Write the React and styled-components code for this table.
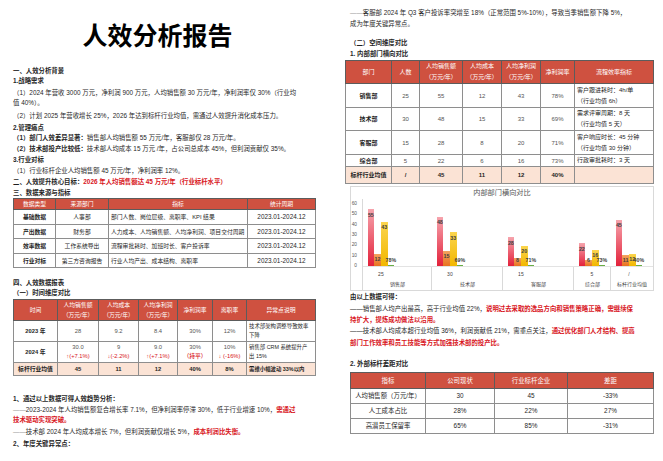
import React from "react";
import styled, { createGlobalStyle } from "styled-components";

const GlobalStyle = createGlobalStyle`
  html, body {
    margin: 0;
    padding: 0;
    background: #fff;
  }
  body {
    font-family: "Liberation Sans", "Noto Sans CJK SC", sans-serif;
    color: #1f1f1f;
  }
`;

// Chinese punctuation: turn , ( ) : into their full-width forms
const zh = (s) =>
  s
    .replace(/,/g, "\uFF0C")
    .replace(/\(/g, "\uFF08")
    .replace(/\)/g, "\uFF09")
    .replace(/:/g, "\uFF1A");

const Spread = styled.div`
  display: flex;
  gap: 34px;
  padding-left: 13px;
  width: 663px;
  height: 461px;
  box-sizing: border-box;
  overflow: hidden;
`;

const Page = styled.div`
  flex: 0 0 303px;
  padding-top: ${({ $top }) => $top || 0}px;
`;

const Title = styled.h1`
  margin: 20px 14px 0 0;
  font-family: "Noto Sans CJK SC", sans-serif;
  font-size: 25px;
  line-height: 28px;
  font-weight: 700;
  text-align: center;
  color: #000;
`;

const Line = styled.div`
  margin-top: ${({ $mt }) => $mt || 0}px;
  font-size: 6.4px;
  line-height: 10.5px;
  font-weight: ${({ $bold }) => ($bold ? 700 : 400)};
  white-space: nowrap;
`;

const B = styled.b`
  font-weight: 700;
`;

const Red = styled.span`
  color: #d8141c;
  font-weight: 700;
`;

const Dash = styled.span`
  color: ${({ $dark }) => ($dark ? "#222" : "#9a9a9a")};
`;

// tables
const Table = styled.table`
  border-collapse: collapse;
  table-layout: fixed;
  width: ${({ $w }) => $w}px;
  margin-left: ${({ $shift }) => $shift || 0}px;
  margin-top: ${({ $mt }) => $mt || 0}px;
  font-family: "Liberation Sans", "Noto Sans CJK SC", sans-serif;
  font-size: ${({ $fs }) => $fs || 5.8}px;
  color: #1f1f1f;
`;

const Col = styled.col`
  width: ${({ $w }) => $w}px;
`;

const Tr = styled.tr`
  height: ${({ $h }) => $h}px;
  background: ${({ $bench }) => ($bench ? "#fbe3d5" : "#fff")};
`;

const Th = styled.th`
  background: #cf5140;
  color: #fff;
  font-weight: 400;
  line-height: ${({ $lh }) => $lh || 10}px;
  padding: 0;
  border: 1px solid #5c5c5c;
  text-align: center;
  white-space: nowrap;
`;

const Td = styled.td`
  border: 1px solid #8e8e8e;
  padding: 0 ${({ $left }) => ($left ? 2 : 0)}px;
  text-align: ${({ $left }) => ($left ? "left" : "center")};
  font-weight: ${({ $bold }) => ($bold ? 700 : 400)};
  font-size: ${({ $fs }) => ($fs ? `${$fs}px` : "inherit")};
  color: ${({ $muted }) => ($muted ? "#555" : "#1f1f1f")};
  line-height: ${({ $lh }) => $lh || 10}px;
  white-space: nowrap;
  overflow: hidden;
`;

const Change = styled.span`
  color: #d8141c;
  font-weight: 500;
`;

// chart
const ChartBox = styled.div`
  width: 304px;
  height: 105px;
  margin-top: 2px;
  box-sizing: border-box;
  border: 1px solid #d9d9d9;
  display: flex;
  flex-direction: column;
`;

const ChartTitle = styled.div`
  text-align: center;
  font-size: 7.2px;
  line-height: 11px;
  color: #595959;
`;

const PlotRow = styled.div`
  display: flex;
  margin-top: 1px;
  flex: 1;
`;

const YAxis = styled.div`
  width: 11px;
  display: flex;
  flex-direction: column;
`;

const Tick = styled.div`
  height: 10.33px;
  line-height: 10.33px;
  font-size: 4.8px;
  color: #595959;
  text-align: right;
  padding-right: 5px;
`;

const Group = styled.div`
  width: ${({ $w }) => $w}px;
  box-sizing: border-box;
  padding-top: 5.17px;
  display: flex;
  flex-direction: column;
  border-left: ${({ $axis }) => ($axis ? "1px solid #d9d9d9" : "none")};
`;

const BarsArea = styled.div`
  height: 62px;
  flex-shrink: 0;
  display: flex;
  align-items: flex-end;
  padding-left: 4.5px;
  border-bottom: 1px solid #e3e3e3;
`;

const barFill = [
  "linear-gradient(180deg, #f6a4ad 0%, #e3213a 100%)",
  "linear-gradient(180deg, #f3a360 0%, #e8721f 100%)",
  "linear-gradient(180deg, #fbd54e 0%, #f2b700 100%)",
  "#68ae45",
];

const Bar = styled.div`
  position: relative;
  width: 6.7px;
  flex-shrink: 0;
  min-height: 1px;
  background: ${({ $i }) => barFill[$i]};
`;

const BarLabel = styled.span`
  position: absolute;
  left: 50%;
  transform: translateX(-50%);
  font-size: 5.3px;
  line-height: 9px;
  font-weight: 700;
  color: #404040;
  white-space: nowrap;
`;

const CatArea = styled.div`
  flex: 1;
  border-left: ${({ $sep }) => ($sep ? "1px solid #d9d9d9" : "none")};
  margin-left: ${({ $sep }) => ($sep ? -1 : 0)}px;
`;

const CatTop = styled.div`
  width: 26.8px;
  margin: 2.5px 0 0 4.5px;
  text-align: center;
  font-size: 5px;
  line-height: 9px;
  color: #404040;
`;

const CatBottom = styled.div`
  margin-top: 1px;
  text-align: center;
  font-size: 5px;
  line-height: 9px;
  color: #404040;
  white-space: nowrap;
`;

const depts = [
  { name: "销售部", count: "25", w: 70, vals: [55, 12, 43, 0.78], tags: ["55", "12", "43", "78%"] },
  { name: "技术部", count: "30", w: 71, vals: [48, 15, 33, 0.69], tags: ["48", "15", "33", "69%"] },
  { name: "客服部", count: "15", w: 71, vals: [28, 8, 20, 0.71], tags: ["28", "8", "20", "71%"] },
  { name: "综合部", count: "5", w: 37, vals: [22, 6, 16, 0.73], tags: ["22", "6", "16", "73%"] },
  { name: "标杆行业均值", count: "/", w: 42, vals: [45, 11, 12, 0.4], tags: ["45", "11", "12", "40%"] },
];

const SCALE = 62 / 60;

const DeptChart = () => (
  <ChartBox>
    <ChartTitle>内部部门横向对比</ChartTitle>
    <PlotRow>
      <YAxis>
        {["60", "50", "40", "30", "20", "10", "0"].map((t) => (
          <Tick key={t}>{t}</Tick>
        ))}
      </YAxis>
      {depts.map((d, gi) => (
        <Group key={d.name} $w={d.w} $axis={gi === 0}>
          <BarsArea>
            {d.vals.map((v, i) => {
              const h = v * SCALE;
              return (
                <Bar key={i} $i={i} style={{ height: h }}>
                  <BarLabel style={{ bottom: Math.max(h - 10.5, 1.5) }}>{d.tags[i]}</BarLabel>
                </Bar>
              );
            })}
          </BarsArea>
          <CatArea $sep={gi > 0}>
            <CatTop>{d.count}</CatTop>
            <CatBottom>{d.name}</CatBottom>
          </CatArea>
        </Group>
      ))}
    </PlotRow>
  </ChartBox>
);

const Cols = ({ widths }) => (
  <colgroup>
    {widths.map((w, i) => (
      <Col key={i} $w={w} />
    ))}
  </colgroup>
);

const UNIT = zh("(万元/年)");

const sourceRows = [
  ["基础数据", "人事部", "部门人数、岗位层级、离职率、KPI 结果"],
  ["产出数据", "财务部", "人力成本、人均销售额、人均净利润、项目交付周期"],
  ["效率数据", "工作系统导出", "流程审批耗时、加班时长、客户投诉率"],
  ["行业对标", "第三方咨询报告", "行业人均产出、成本结构、离职率"],
];

const SourceTable = () => (
  <Table $w={302}>
    <Cols widths={[42, 53, 139, 68]} />
    <tbody>
      <Tr $h={11}>
        <Th>数据类型</Th>
        <Th>来源部门</Th>
        <Th>指标</Th>
        <Th>统计周期</Th>
      </Tr>
      {sourceRows.map((r) => (
        <Tr key={r[0]} $h={14.5}>
          <Td $bold>{r[0]}</Td>
          <Td>{r[1]}</Td>
          <Td $left>{r[2]}</Td>
          <Td $fs={6.4}>2023.01-2024.12</Td>
        </Tr>
      ))}
    </tbody>
  </Table>
);

const TimeTable = () => (
  <Table $w={302}>
    <Cols widths={[44, 41, 40, 39, 35, 34, 69]} />
    <tbody>
      <Tr $h={21}>
        <Th>时间</Th>
        <Th>人均销售额<br />{UNIT}</Th>
        <Th>人均成本<br />{UNIT}</Th>
        <Th>人均净利润<br />{UNIT}</Th>
        <Th>净利润率</Th>
        <Th>离职率</Th>
        <Th>异常点说明</Th>
      </Tr>
      <Tr $h={21}>
        <Td $bold>2023 年</Td>
        <Td $muted>28</Td>
        <Td $muted>9.2</Td>
        <Td $muted>8.4</Td>
        <Td $muted>30%</Td>
        <Td $muted>12%</Td>
        <Td $left $fs={5.4} $lh={9}>技术部架构调整导致效率<br />下降</Td>
      </Tr>
      <Tr $h={21}>
        <Td $bold>2024 年</Td>
        <Td $muted $lh={9}>30.0<br /><Change>↑(+7.1%)</Change></Td>
        <Td $muted $lh={9}>9<br /><Change>↓(-2.2%)</Change></Td>
        <Td $muted $lh={9}>9.0<br /><Change>↑(+7.1%)</Change></Td>
        <Td $muted $lh={9}>30%<br /><Change>{zh("(持平)")}</Change></Td>
        <Td $muted $lh={9}>10%<br /><Change>↓ (-16%)</Change></Td>
        <Td $left $fs={5.4} $lh={9}>销售部 CRM 系统提升产<br />出 15%</Td>
      </Tr>
      <Tr $h={13} $bench>
        <Td $bold>标杆行业均值</Td>
        <Td $bold>45</Td>
        <Td $bold>11</Td>
        <Td $bold>12</Td>
        <Td $bold>40%</Td>
        <Td $bold>8%</Td>
        <Td $bold $left $fs={5.4}>需维小幅波动 33%以内</Td>
      </Tr>
    </tbody>
  </Table>
);

const deptRows = [
  { h: 24, name: "销售部", v: ["25", "55", "12", "43", "78%"], note: ["客户跟进耗时:4h/单", "(行业均值 6h)"] },
  { h: 22, name: "技术部", v: ["30", "48", "15", "33", "69%"], note: ["需求评审周期:8 天", "(行业均值 5 天)"] },
  { h: 24, name: "客服部", v: ["15", "28", "8", "20", "71%"], note: ["客户响应时长:45 分钟", "(行业均值 30 分钟)"] },
  { h: 12, name: "综合部", v: ["5", "22", "6", "16", "73%"], note: ["行政审批耗时:3 天"] },
];

const DeptTable = () => (
  <Table $w={308} $shift={-5} $mt={0.75} $fs={6}>
    <Cols widths={[46, 28, 43, 39, 39, 34, 79]} />
    <tbody>
      <Tr $h={22}>
        <Th $lh={11}>部门</Th>
        <Th $lh={11}>人数</Th>
        <Th $lh={11}>人均销售额<br />{UNIT}</Th>
        <Th $lh={11}>人均成本<br />{UNIT}</Th>
        <Th $lh={11}>人均净利润<br />{UNIT}</Th>
        <Th $lh={11}>净利润率</Th>
        <Th $lh={11}>流程效率指标</Th>
      </Tr>
      {deptRows.map((r) => (
        <Tr key={r.name} $h={r.h}>
          <Td $bold>{r.name}</Td>
          {r.v.map((x, i) => (
            <Td key={i} $muted>{x}</Td>
          ))}
          <Td $left $lh={11}>
            {zh(r.note[0])}
            {r.note[1] && <br />}
            {r.note[1] && zh(r.note[1])}
          </Td>
        </Tr>
      ))}
      <Tr $h={17} $bench>
        <Td $bold>标杆行业均值</Td>
        <Td $bold>/</Td>
        <Td $bold>45</Td>
        <Td $bold>11</Td>
        <Td $bold>12</Td>
        <Td $bold>40%</Td>
        <Td />
      </Tr>
    </tbody>
  </Table>
);

const gapRows = [
  [zh("人均销售额(万元/年)"), "30", "45", "-33%"],
  ["人工成本占比", "28%", "22%", "27%"],
  ["高潜员工保留率", "65%", "85%", "-31%"],
];

const GapTable = () => (
  <Table $w={303} $mt={2.75} $fs={6.4}>
    <Cols widths={[75, 69, 73, 86]} />
    <tbody>
      <Tr $h={16}>
        <Th>指标</Th>
        <Th>公司现状</Th>
        <Th>行业标杆企业</Th>
        <Th>差距</Th>
      </Tr>
      {gapRows.map((r) => (
        <Tr key={r[0]} $h={15}>
          {r.map((x, i) => (
            <Td key={i}>{x}</Td>
          ))}
        </Tr>
      ))}
    </tbody>
  </Table>
);

const App = () => (
  <>
    <GlobalStyle />
    <Spread>
      <Page>
        <Title>人效分析报告</Title>
        <Line $mt={17.75} $bold>一、人效分析背景</Line>
        <Line $bold>1.战略需求</Line>
        <Line $mt={1}>{zh("(1)2024 年营收 3000 万元,净利润 900 万元,人均销售额 30 万元/年,净利润率仅 30%(行业均")}</Line>
        <Line>{zh("值 40%)。")}</Line>
        <Line $mt={2}>{zh("(2)计划 2025 年营收增长 25%,2026 年达到标杆行业均值,需通过人效提升消化成本压力。")}</Line>
        <Line $mt={1.5} $bold>2.管理痛点</Line>
        <Line>
          <B>{zh("(1)部门人效差异显著:")}</B>
          {zh("销售部人均销售额 55 万元/年,客服部仅 28 万元/年。")}
        </Line>
        <Line>
          <B>{zh("(2)技术部投产比较低:")}</B>
          {zh("技术部人均成本 15 万元 /年,占公司总成本 45%,但利润贡献仅 35%。")}
        </Line>
        <Line $mt={1} $bold>3.行业对标</Line>
        <Line>{zh("(1)行业标杆企业人均销售额 45 万元/年,净利润率 12%。")}</Line>
        <Line $mt={1}>
          <B>{zh("二、人效提升核心目标:")}</B>
          <Red>{zh("2026 年人均销售额达 45 万元/年(行业标杆水平)")}</Red>
        </Line>
        <Line $bold>三、数据来源与指标</Line>
        <SourceTable />
        <Line $mt={9.5} $bold>四、人效数据报表</Line>
        <Line $bold>{zh("(一)时间维度对比")}</Line>
        <TimeTable />
        <Line $mt={18} $bold>{zh("1、通过以上数据可得人效趋势分析:")}</Line>
        <Line $mt={0.5}>
          <Dash>——</Dash>
          {zh("2023-2024 年人均销售额复合增长率 7.1%,但净利润率停滞 30%,低于行业增速 10%,")}
          <Red>需通过</Red>
        </Line>
        <Line><Red>技术驱动实现突破。</Red></Line>
        <Line $mt={1}>
          <Dash>——</Dash>
          {zh("技术部 2024 年人均成本增长 7%,但利润贡献仅增长 5%,")}
          <Red>成本利润比失衡。</Red>
        </Line>
        <Line $mt={1.5} $bold>{zh("2、年度关键异常点:")}</Line>
      </Page>
      <Page $top={7.75}>
        <Line>
          <Dash>——</Dash>
          {zh("客服部 2024 年 Q3 客户投诉率突增至 18%(正常范围 5%-10%),导致当季销售额下降 5%,")}
        </Line>
        <Line $mt={0.5}>成为年度关键异常点。</Line>
        <Line $mt={8.5} $bold>{zh("(二)空间维度对比")}</Line>
        <Line $mt={0.5} $bold>1. 内部部门横向对比</Line>
        <DeptTable />
        <DeptChart />
        <Line $mt={0.75} $bold>{zh("由以上数据可得:")}</Line>
        <Line $mt={1.5}>
          <Dash $dark>——</Dash>
          {zh("销售部人均产出最高,高于行业均值 22%,")}
          <Red>{zh("说明过去采取的选品方向和销售策略正确,需继续保")}</Red>
        </Line>
        <Line $mt={0.5}><Red>{zh("持扩大,提炼成功做法以沿用。")}</Red></Line>
        <Line $mt={0.75}>
          <Dash $dark>——</Dash>
          {zh("技术部人均成本超行业均值 36%,利润贡献低 21%,需重点关注,")}
          <Red>{zh("通过优化部门人才结构、提高")}</Red>
        </Line>
        <Line $mt={1.25}><Red>部门工作效率和员工技能等方式加强技术部的投产比。</Red></Line>
        <Line $mt={10.5} $bold>2. 外部标杆差距对比</Line>
        <GapTable />
      </Page>
    </Spread>
  </>
);

export default App;
